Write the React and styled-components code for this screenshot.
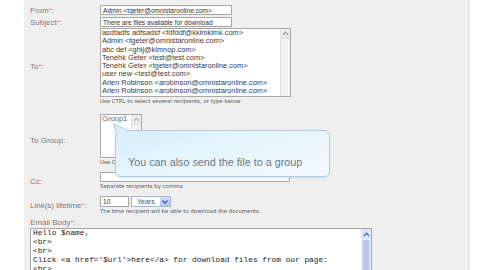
import styled, { createGlobalStyle } from "styled-components"

const GlobalStyle = createGlobalStyle`
  html, body {
    margin: 0;
    padding: 0;
    background: #fff;
    overflow: hidden;
  }
  body {
    font-family: "Liberation Sans", Arial, sans-serif;
  }
`

const recipients = [
    "asdfadfs adfsadsf <fdfddf@kklmklmk.com>",
    "Admin <tgeter@omnistaronline.com>",
    "abc def <ghij@klmnop.com>",
    "Tenehk Geter <test@test.com>",
    "Tenehk Geter <tgeter@omnistaronline.com>",
    "user new <test@test.com>",
    "Arlen Robinson <arobinson@omnistaronline.com>",
    "Arlen Robinson <arobinson@omnistaronline.com>",
]

const bodyLines = [
    "Hello $name,",
    "<br>",
    "<br>",
    "Click <a href='$url'>here</a> for download files from our page:",
    "<br>",
]

function UpArrow({ color = "#9a9a9a" }) {
    return (
        <svg width="7" height="5" viewBox="0 0 7 5">
            <path d="M1 4 L3.5 1.2 L6 4" fill="none" stroke={color} strokeWidth="1.2" />
        </svg>
    )
}

function Req({ children }) {
    return <>{children}<Star>*</Star>:</>
}

export default function App() {
    return (
        <Page>
            <GlobalStyle />
            <Panel>
                <Row $mt={0}>
                    <Label><Req>From</Req></Label>
                    <TextInput $w={132} value="Admin <tgeter@omnistaronline.com>" readOnly />
                </Row>
                <Row $mt={2}>
                    <Label><Req>Subject</Req></Label>
                    <TextInput $w={132} value="There are files available for download" readOnly />
                </Row>
                <Row $mt={1}>
                    <Label><Req>To</Req></Label>
                    <Field>
                        <ListBox $w={191} $h={69}>
                            <Items>
                                {recipients.map((r, i) => (
                                    <Item key={i}>{r}</Item>
                                ))}
                            </Items>
                            <ScrollBar>
                                <ScrollBtn><UpArrow /></ScrollBtn>
                            </ScrollBar>
                        </ListBox>
                        <Hint>Use CTRL to select several recipients, or type below</Hint>
                    </Field>
                </Row>
                <Row $mt={9}>
                    <Label>To Group:</Label>
                    <Field>
                        <ListBox $w={42} $h={44}>
                            <Items>
                                <GroupItem>Group1</GroupItem>
                            </Items>
                            <ScrollBar>
                                <ScrollBtn><UpArrow color="#b5b5b5" /></ScrollBtn>
                            </ScrollBar>
                        </ListBox>
                        <Hint>Use CTRL to select several groups</Hint>
                    </Field>
                </Row>
                <Row $mt={6}>
                    <Label>Cc:</Label>
                    <Field>
                        <TextInput $w={190} value="" readOnly />
                        <Hint>Separate recipients by comma</Hint>
                    </Field>
                </Row>
                <Row $mt={6}>
                    <Label><Req>Link(s) lifetime</Req></Label>
                    <Field>
                        <Inline>
                            <TextInput $w={29} $h={11} value="10" readOnly />
                            <Dropdown>
                                <span>Years</span>
                                <DropBtn>
                                    <svg width="6" height="4" viewBox="0 0 6 4">
                                        <path d="M0.5 0.5 L3 3.2 L5.5 0.5" fill="none" stroke="#3b56b8" strokeWidth="1.3" />
                                    </svg>
                                </DropBtn>
                            </Dropdown>
                        </Inline>
                        <Hint>The time recipient will be able to download the documents.</Hint>
                    </Field>
                </Row>
                <BodyLabel><Req>Email Body</Req></BodyLabel>
                <BodyBox>
                    <Code>
                        {bodyLines.map((l, i) => (
                            <CodeLine key={i}>{l}</CodeLine>
                        ))}
                    </Code>
                    <BlueScroll>
                        <BlueBtn><UpArrow color="#4d63b5" /></BlueBtn>
                        <Thumb />
                    </BlueScroll>
                </BodyBox>

                <Bubble>
                    <Pointer width="17" height="9" viewBox="0 0 17 9">
                        <polygon points="1,1 3,9 16,9" fill="#d9effa" />
                        <polyline points="3,9 1,1 16,8" fill="none" stroke="#a8cde4" strokeWidth="1" />
                    </Pointer>
                    You can also send the file to a group
                </Bubble>
            </Panel>
            <Edge />
        </Page>
    )
}

const Page = styled.div`
    display: flex;
    padding-left: 24px;
    height: 270px;
    overflow: hidden;
`

const Panel = styled.div`
    position: relative;
    width: 436px;
    height: 270px;
    padding: 5px 0 0 6px;
    background: #efefef;
    border-right: 1px solid #f9f9f9;
    box-sizing: content-box;
`

const Edge = styled.div`
    width: 3px;
    background: #ebebeb;
`

const Row = styled.div`
    display: flex;
    align-items: center;
    margin-top: ${p => p.$mt}px;
`

const Label = styled.div`
    width: 70px;
    flex-shrink: 0;
    font-size: 8px;
    line-height: 9px;
    color: #7a7a7a;
`

const Star = styled.span`
    color: #ef7f95;
`

const Field = styled.div`
    display: flex;
    flex-direction: column;
`

const Inline = styled.div`
    display: flex;
    gap: 2px;
`

const TextInput = styled.input`
    display: block;
    width: ${p => p.$w}px;
    height: ${p => p.$h || 10}px;
    box-sizing: border-box;
    margin: 0;
    padding: 0 2px;
    border: 1px solid #a7a7a7;
    background: #fff;
    font-family: "Liberation Sans", Arial, sans-serif;
    font-size: 6.6px;
    color: #333;
    outline: none;
`

const ListBox = styled.div`
    display: flex;
    width: ${p => p.$w}px;
    height: ${p => p.$h}px;
    box-sizing: border-box;
    border: 1px solid #a9a9a9;
    background: #fff;
    overflow: hidden;
`

const Items = styled.div`
    flex: 1;
    padding: 0 0 0 1px;
    overflow: hidden;
`

const Item = styled.div`
    font-size: 7.4px;
    line-height: 8.3px;
    color: #3a3a3a;
    white-space: nowrap;
`

const GroupItem = styled(Item)`
    font-size: 7.6px;
    line-height: 8px;
    color: #666;
`

const ScrollBar = styled.div`
    width: 9px;
    flex-shrink: 0;
    background: #f3f3f3;
    border-left: 1px solid #e2e2e2;
`

const ScrollBtn = styled.div`
    height: 9px;
    display: flex;
    align-items: center;
    justify-content: center;
    background: #ececec;
    border-bottom: 1px solid #dedede;
`

const Hint = styled.div`
    font-family: "DejaVu Sans", Verdana, sans-serif;
    font-size: 5.4px;
    line-height: 8px;
    color: #555;
    white-space: nowrap;
`

const Dropdown = styled.div`
    display: flex;
    align-items: center;
    width: 40px;
    height: 11px;
    box-sizing: border-box;
    border: 1px solid #a7b3cf;
    background: #fff;
    font-size: 7px;
    color: #555;

    & span {
        flex: 1;
        padding-left: 5px;
    }
`

const DropBtn = styled.div`
    width: 10px;
    height: 9px;
    display: flex;
    align-items: center;
    justify-content: center;
    background: linear-gradient(#d6e0fb, #b4c3f2);
`

const BodyLabel = styled.div`
    margin-top: 3px;
    font-size: 8px;
    line-height: 9px;
    color: #7a7a7a;
`

const BodyBox = styled.div`
    display: flex;
    width: 342px;
    height: 60px;
    margin-top: 1px;
    box-sizing: border-box;
    border: 1px solid #a5a5a5;
    background: #fff;
`

const Code = styled.div`
    flex: 1;
    padding: 0 0 0 2px;
    overflow: hidden;
`

const CodeLine = styled.div`
    font-family: "Liberation Mono", "Courier New", monospace;
    font-size: 7.8px;
    line-height: 9px;
    color: #222;
    white-space: pre;
`

const BlueScroll = styled.div`
    width: 10px;
    flex-shrink: 0;
    display: flex;
    flex-direction: column;
    background: #eef1fd;
`

const BlueBtn = styled.div`
    height: 10px;
    display: flex;
    align-items: center;
    justify-content: center;
    background: #dce3fb;
`

const Thumb = styled.div`
    flex: 1;
    margin: 1px 1px 0;
    background: linear-gradient(90deg, #c9d3f8, #b3c0f0, #c9d3f8);
    border-radius: 1px;
`

const Bubble = styled.div`
    position: absolute;
    left: 91px;
    top: 130px;
    width: 215px;
    height: 47px;
    box-sizing: border-box;
    padding-top: 25px;
    padding-left: 12px;
    border: 1px solid #a8cde4;
    border-radius: 6px;
    background: linear-gradient(165deg, #d6eefb 0%, #e6f5fc 45%, #f4fafd 100%);
    box-shadow: 0 1px 2px rgba(120, 150, 170, 0.25);
    font-size: 10.8px;
    line-height: 12px;
    color: #6b7a84;
    white-space: nowrap;
`

const Pointer = styled.svg`
    position: absolute;
    left: -3px;
    top: -8px;
`
